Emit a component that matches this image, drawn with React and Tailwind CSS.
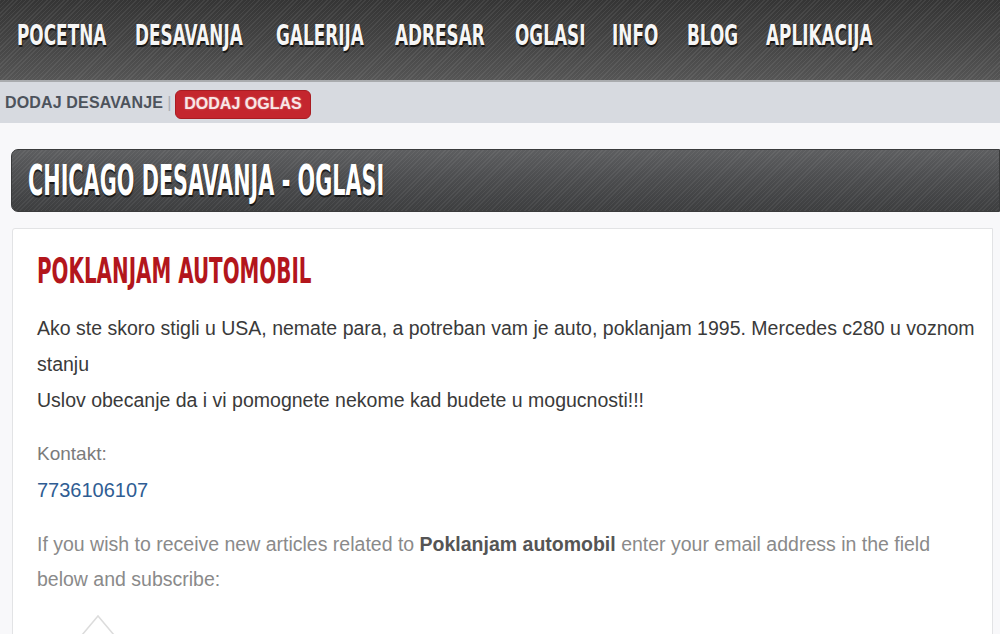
import React from "react";

const COND = "font-['DejaVu_Sans_Condensed','Liberation_Sans_Narrow',sans-serif] font-bold";

function Cond({ box, inner, children }) {
  return (
    <span className={`inline-block whitespace-nowrap ${box}`}>
      <span className={`inline-block origin-left ${inner}`}>{children}</span>
    </span>
  );
}

const NAV = [
  ["POCETNA", "w-[87px]"],
  ["DESAVANJA", "w-[110px]"],
  ["GALERIJA", "w-[88px]"],
  ["ADRESAR", "w-[89px]"],
  ["OGLASI", "w-[66px]"],
  ["INFO", "w-[44px]"],
  ["BLOG", "w-[48px]"],
  ["APLIKACIJA", "w-[107px]"],
];

export default function App() {
  return (
    <div className="w-[1000px] h-[634px] overflow-hidden bg-[#f8f8fa] font-['Liberation_Sans',Arial,sans-serif]">
      {/* top nav */}
      <nav className="h-[82px] border-b-2 border-[#a9abae] bg-[image:repeating-linear-gradient(135deg,rgba(255,255,255,0.07)_0_1px,transparent_1px_3px),linear-gradient(180deg,#353535_0%,#454545_55%,#555555_100%)]">
        <ul className="flex gap-[31px] pl-[17px] pt-[22px]">
          {NAV.map(([label, w]) => (
            <li key={label} className={`${COND} text-[28px] leading-[28px] text-[#f6f6f6] [text-shadow:1px_2px_1px_rgba(0,0,0,0.75)]`}>
              <Cond box={w} inner="scale-x-[0.67]">{label}</Cond>
            </li>
          ))}
        </ul>
      </nav>

      {/* sub bar */}
      <div className="h-[41px] bg-[#d7dae0] flex items-center pl-[5px] text-[16px] font-bold">
        <span className="text-[#4d535c] tracking-[0.15px]">DODAJ DESAVANJE</span>
        <span className="text-[#a9aeb5] font-normal mx-[4px]">|</span>
        <span className="mt-[3px] h-[29px] px-[8px] flex items-center rounded-[6px] bg-[#c4262e] border border-[#a91c22] text-[#f8e6e6] [text-shadow:0_0_2px_rgba(255,255,255,0.4)]">
          DODAJ OGLAS
        </span>
      </div>

      {/* title bar */}
      <div className="mt-[26px] ml-[11px] h-[63px] rounded-l-[7px] border border-[#3a3b3c] flex items-center pl-[16px] bg-[image:repeating-linear-gradient(135deg,rgba(255,255,255,0.06)_0_1px,transparent_1px_3px),linear-gradient(180deg,#5d5e60_0%,#4b4c4e_50%,#3d3e3f_100%)]">
        <h1 className={`${COND} text-[42px] leading-[42px] text-white [text-shadow:1px_2px_1px_rgba(0,0,0,0.7)]`}>
          <Cond box="w-[360px]" inner="scale-x-[0.55]">CHICAGO DESAVANJA - OGLASI</Cond>
        </h1>
      </div>

      {/* card */}
      <div className="mt-[16px] ml-[12px] mr-[7px] h-[420px] bg-white border border-[#e2e3e5] rounded-tl-[3px] pt-[22px] pl-[24px] pr-[8px]">
        <h2 className={`${COND} text-[35px] leading-[40px] text-[#b3161c]`}>
          <Cond box="w-[280px]" inner="scale-x-[0.632]">POKLANJAM AUTOMOBIL</Cond>
        </h2>
        <p className="mt-[19px] text-[19.5px] leading-[36px] text-[#3a3a3a]">
          Ako ste skoro stigli u USA, nemate para, a potreban vam je auto, poklanjam 1995. Mercedes c280 u voznom stanju
          <br />
          Uslov obecanje da i vi pomognete nekome kad budete u mogucnosti!!!
        </p>
        <p className="mt-[18px] text-[19px] leading-[36px] text-[#7b7b7b]">Kontakt:</p>
        <p className="text-[20px] leading-[36px] text-[#2f5d93]">7736106107</p>
        <p className="mt-[19px] text-[19.5px] leading-[35px] text-[#8a8a8a]">
          If you wish to receive new articles related to <b className="text-[#555]">Poklanjam automobil</b> enter your email address in the field
          <br />
          below and subscribe:
        </p>
        <svg className="mt-[16px] ml-[43px]" width="40" height="24" viewBox="0 0 40 24">
          <polyline points="2,22 18,3 34,22" fill="none" stroke="#dcdcdc" strokeWidth="1.5" />
        </svg>
      </div>
    </div>
  );
}
